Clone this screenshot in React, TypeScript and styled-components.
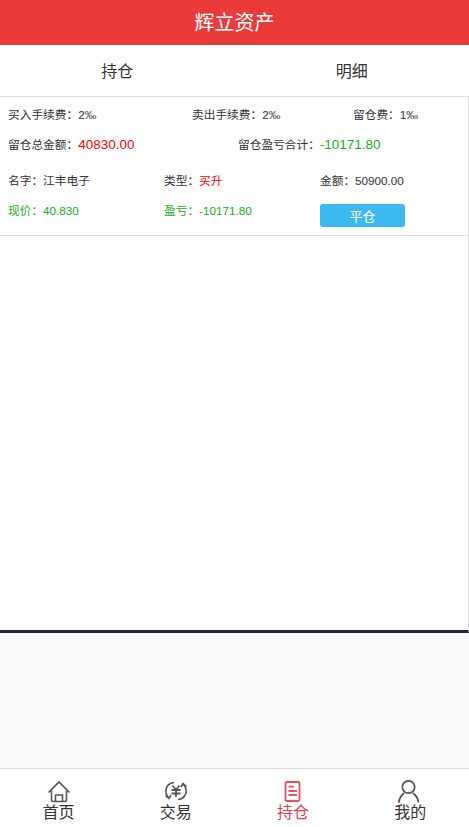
import { createGlobalStyle, styled } from 'styled-components';

const GlobalStyle = createGlobalStyle`
  html, body {
    margin: 0;
    padding: 0;
    background: #fff;
    font-family: "Liberation Sans", "Noto Sans CJK SC", sans-serif;
    color: #333;
  }
  * { box-sizing: border-box; }
`;

const Page = styled.div`
  width: 469px;
  height: 827px;
  display: flex;
  flex-direction: column;
  overflow: hidden;
`;

const Header = styled.header`
  height: 45px;
  flex: none;
  background: #ea3a3a;
  color: #fff;
  font-size: 20px;
  line-height: 47px;
  text-align: center;
`;

const Tabs = styled.nav`
  height: 52px;
  flex: none;
  display: grid;
  grid-template-columns: 1fr 1fr;
  border-bottom: 1px solid #ddd;
`;

const Tab = styled.div`
  font-size: 16px;
  line-height: 53px;
  text-align: center;
`;

const Panel = styled.main`
  height: 536px;
  flex: none;
  border-right: 1px solid #ddd;
  border-bottom: 3px solid #23233a;
`;

const Summary = styled.section`
  display: flex;
  flex-direction: column;
  padding: 1px 0 0 8px;
`;

const FeeRow = styled.div`
  height: 30px;
  display: grid;
  grid-template-columns: 184px 161px 1fr;
  align-items: center;
  font-size: 11.7px;
`;

const TotalRow = styled.div`
  height: 30px;
  display: grid;
  grid-template-columns: 230px 1fr;
  align-items: center;
  font-size: 11.7px;
`;

const Amount = styled.span<{ $tone: string }>`
  font-size: 13.5px;
  color: ${(p) => p.$tone};
`;

const Position = styled.section`
  height: 72px;
  margin-top: 6px;
  padding-left: 8px;
  border-bottom: 1px solid #ddd;
  display: grid;
  grid-template-columns: 156px 156px 1fr;
  grid-template-rows: 30px 30px;
  align-content: start;
  align-items: center;
  font-size: 11.7px;
`;

const Cell = styled.div<{ $tone?: string }>`
  color: ${(p) => p.$tone || '#333'};
`;

const ButtonCell = styled.div`
  align-self: start;
  padding-top: 10px;
`;

const Mark = styled.span`
  color: #f00;
`;

const CloseButton = styled.button`
  display: block;
  width: 85px;
  height: 23px;
  padding: 0;
  border: none;
  border-radius: 3px;
  background: #3cb9ef;
  color: #fff;
  font: inherit;
  font-size: 13px;
`;

const Spacer = styled.div`
  flex: 1;
  background: #f9f9f9;
`;

const Footer = styled.footer`
  height: 59px;
  flex: none;
  background: #fff;
  border-top: 1px solid #ddd;
  display: grid;
  grid-template-columns: repeat(4, 1fr);
`;

const NavItem = styled.div<{ $active?: boolean }>`
  display: flex;
  flex-direction: column;
  align-items: center;
  padding-top: 11px;
  font-size: 16px;
  line-height: 20px;
  color: ${(p) => (p.$active ? '#e0404a' : '#333')};
`;

const NavIcon = styled.svg`
  width: 24px;
  height: 24px;
  margin-bottom: -1px;
  fill: none;
  stroke-width: 1.6;
`;

function HomeIcon() {
  return (
    <NavIcon viewBox="0 0 24 24" stroke="#555">
      <path d="M1.500 12.500 12 2l10.500 10.500" />
      <path d="M4.500 10.500V20q0 1.500 1.500 1.500h12q1.500 0 1.500-1.500v-9.500" />
      <path d="M8.500 21.500V15h7v6.500" />
    </NavIcon>
  );
}

function TradeIcon() {
  return (
    <NavIcon viewBox="0 0 24 24" stroke="#555">
      <path d="M10 2.500C4 3 1 8 2 13c.5 2 1.500 4 3 5" />
      <path d="M1.500 15.500 5 18.500l2-3.500" />
      <path d="M14 19.500c6-.5 9-5.500 8-10.500-.5-2-1.500-4-3-5" />
      <path d="M22.500 6.500 19 3.500l-2 3.500" />
      <path d="M8.500 5.500 12 9.500l3.500-4M7.500 10h9M7.500 13.500h9M12 9.500V17" strokeWidth="1.8" />
    </NavIcon>
  );
}

function OrderIcon() {
  return (
    <NavIcon viewBox="0 0 24 24" stroke="#e8505a">
      <rect x="4.500" y="2" width="14" height="19" rx="1.500" strokeWidth="1.8" />
      <path d="M7.500 6.700h5.500M7.500 11h8.500M7.500 15h8.500" strokeWidth="1.800" />
    </NavIcon>
  );
}

function UserIcon() {
  return (
    <NavIcon viewBox="0 0 24 24" stroke="#555">
      <circle cx="10.500" cy="7" r="6.200" strokeWidth="1.800" />
      <path d="M.8 22.500C1.500 18 3.500 15 6 13M20.500 22.500C20 18 17.500 15 15 13" strokeWidth="1.800" />
    </NavIcon>
  );
}

export default function App() {
  return (
    <Page>
      <GlobalStyle />
      <Header>辉立资产</Header>
      <Tabs>
        <Tab>持仓</Tab>
        <Tab>明细</Tab>
      </Tabs>
      <Panel>
        <Summary>
          <FeeRow>
            <span>买入手续费：2‰</span>
            <span>卖出手续费：2‰</span>
            <span>留仓费：1‰</span>
          </FeeRow>
          <TotalRow>
            <span>
              留仓总金额：<Amount $tone="#f00">40830.00</Amount>
            </span>
            <span>
              留仓盈亏合计：<Amount $tone="#1aac19">-10171.80</Amount>
            </span>
          </TotalRow>
        </Summary>
        <Position>
          <Cell>名字：江丰电子</Cell>
          <Cell>
            类型：<Mark>买升</Mark>
          </Cell>
          <Cell>金额：50900.00</Cell>
          <Cell $tone="#1aac19">现价：40.830</Cell>
          <Cell $tone="#1aac19">盈亏：-10171.80</Cell>
          <ButtonCell>
            <CloseButton>平仓</CloseButton>
          </ButtonCell>
        </Position>
      </Panel>
      <Spacer />
      <Footer>
        <NavItem>
          <HomeIcon />
          首页
        </NavItem>
        <NavItem>
          <TradeIcon />
          交易
        </NavItem>
        <NavItem $active>
          <OrderIcon />
          持仓
        </NavItem>
        <NavItem>
          <UserIcon />
          我的
        </NavItem>
      </Footer>
    </Page>
  );
}
